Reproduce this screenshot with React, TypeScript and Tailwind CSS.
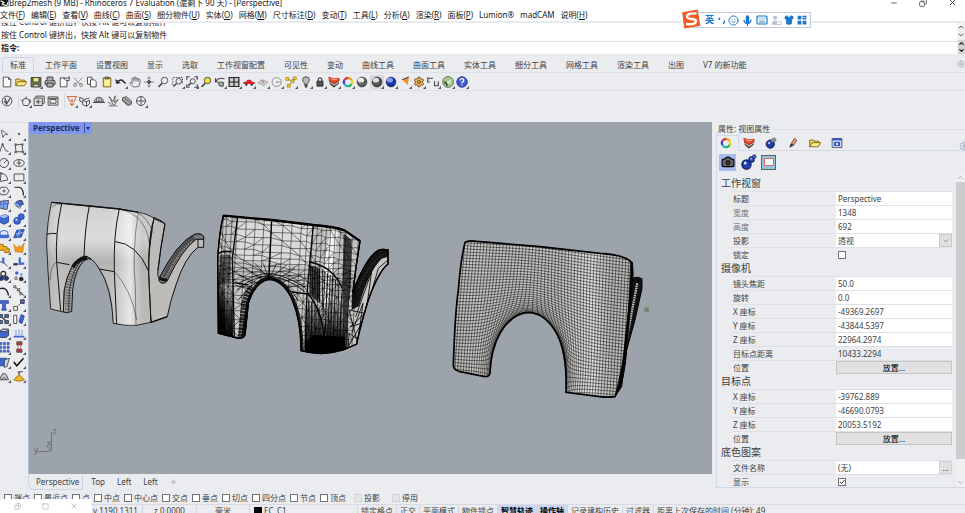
import React from 'react';
import {
  Camera, ChevronDown, ChevronUp, Copy, Hand, Keyboard, Mic, Minus,
  MousePointer2, Printer, Scissors, Settings, Shirt, Smile, Square, X,
} from 'lucide-react';

/* ---------- icons ---------- */

const Svg: React.FC<{ children: React.ReactNode; className?: string }> = ({ children, className = 'size-3' }) => (
  <svg viewBox="0 0 16 16" className={`${className} shrink-0`} fill="none" stroke="#444" strokeWidth="1.2" aria-hidden="true">
    {children}
  </svg>
);

const Sphere = ({ a, b }: { a: string; b: string }) => (
  <Svg>
    <circle cx="8" cy="8" r="6.5" fill={b} stroke="#222" strokeWidth="0.8" />
    <ellipse cx="6.5" cy="5.5" rx="4.3" ry="3.2" fill={a} stroke="none" />
    <path d="M3 10 Q8 13 13 9" stroke={a} strokeWidth="0.8" opacity="0.5" />
  </Svg>
);

const Wheel = () => (
  <Svg>
    <path d="M8 2.5 A5.5 5.5 0 0 1 12.8 5.3" stroke="#f59b1c" strokeWidth="3" />
    <path d="M12.8 5.3 A5.5 5.5 0 0 1 12.8 10.7" stroke="#e8d51c" strokeWidth="3" />
    <path d="M12.8 10.7 A5.5 5.5 0 0 1 8 13.5" stroke="#27b54a" strokeWidth="3" />
    <path d="M8 13.5 A5.5 5.5 0 0 1 3.2 10.7" stroke="#1fb5d8" strokeWidth="3" />
    <path d="M3.2 10.7 A5.5 5.5 0 0 1 3.2 5.3" stroke="#4338d8" strokeWidth="3" />
    <path d="M3.2 5.3 A5.5 5.5 0 0 1 8 2.5" stroke="#e82a4b" strokeWidth="3" />
  </Svg>
);

const Layers = () => (
  <Svg>
    <path d="M2 6 L8 10 L14 6 V10 L8 15 L3 11Z" fill="#5a403c" stroke="#333" strokeWidth="0.8" />
    <path d="M1 1.5 L8 3.5 L15 3 V6 L8 10 L2 7Z" fill="#ef4a26" stroke="#8f2415" strokeWidth="0.7" />
    <path d="M3 8.5 L8 12 L14 8" stroke="#f4f4f4" />
    <path d="M4 3.5 L8 5 L12 4.5" stroke="#ffb199" />
  </Svg>
);

const Folder = () => (
  <Svg>
    <path d="M1 13 V4 H6 L7 5.5 H13 V8" fill="#f6dc62" stroke="#7d6511" />
    <path d="M1 13 L4 7.5 H15.5 L12.5 13Z" fill="#fbe98b" stroke="#7d6511" />
  </Svg>
);

const Lens = ({ fill = 'none' }: { fill?: string }) => (
  <Svg>
    <circle cx="10" cy="6" r="4.3" fill={fill} />
    <path d="M7 9.5 L2 14.5" strokeWidth="2" />
  </Svg>
);

const Blob = () => (
  <Svg className="size-4">
    <circle cx="5.5" cy="10.5" r="4.6" fill="#1f3fb4" stroke="#10205f" />
    <path d="M8 8 L10 6" stroke="#10205f" strokeWidth="2.5" />
    <circle cx="10.5" cy="5.5" r="2.6" fill="#2f55c6" stroke="#10205f" />
    <circle cx="13.3" cy="2.6" r="1.8" fill="#4b72e3" stroke="#10205f" strokeWidth="0.8" />
    <circle cx="4.2" cy="9" r="1.5" fill="#d9e4ff" stroke="none" />
    <circle cx="10" cy="4.8" r="0.8" fill="#d9e4ff" stroke="none" />
  </Svg>
);

const standardTools: { name: string; icon: React.ReactNode; fly?: boolean; on?: boolean }[] = [
  { name: 'New', icon: <Svg><path d="M3 1.5 H10 L13 4.5 V14.5 H3Z" fill="#fff" /><path d="M10 1.5 V4.5 H13" /></Svg> },
  { name: 'Open', icon: <Folder /> },
  { name: 'Save', icon: <Svg><path d="M1.5 2 H14.5 V14.5 H1.5Z" fill="#77783d" stroke="#333" /><path d="M4 2 H12 V8 H4Z" fill="#e8e68c" /><path d="M4.5 11 H11.5 V14.5 H4.5Z" fill="#ddd" /></Svg>, fly: true },
  { name: 'Print', icon: <Printer className="size-3 text-neutral-700" fill="#aaa" /> },
  { name: 'Properties', icon: <Svg><path d="M3 2.5 H9 V5 H12 V14.5 H3Z" fill="#fff" /><path d="M7 3 H12 L15 1 V6 L11 6" fill="#ddd" /></Svg> },
  { name: 'Cut', icon: <Scissors className="size-3 -rotate-90 text-neutral-500" strokeWidth={1.6} /> },
  { name: 'Copy', icon: <Svg><path d="M2 1.5 H8 V11 H2Z" fill="#fff" /><path d="M6 5 H11 L13.5 7.5 V14.5 H6Z" fill="#fff" /></Svg> },
  { name: 'Paste', icon: <Svg><path d="M3 2.5 H13 V14.5 H3Z" fill="#f4df62" stroke="#6b5d14" /><path d="M5.5 1.5 H10.5 V4 H5.5Z" fill="#999" /><path d="M5 5 H12 V13 H5Z" fill="#fbf0a4" stroke="none" /></Svg> },
  { name: 'Undo', icon: <Svg><path d="M2 9 Q7 3 11 7 Q13 9 14 10" stroke="#222" strokeWidth="2" /><path d="M1 5 L2 10 L7 9Z" fill="#222" /></Svg>, fly: true },
  { name: 'Pan', icon: <Hand className="size-3 text-neutral-600" strokeWidth={1.6} /> },
  { name: 'Move view', icon: <Svg><path d="M8 1 V15 M1 8 H15 M6 4 L8 1 L10 4 M6 12 L8 15 L10 12" stroke="#888" /><circle cx="8" cy="8" r="2" fill="#666" /></Svg> },
  { name: 'Zoom', icon: <Lens /> },
  { name: 'Zoom window', icon: <Svg><path d="M1 12 V2 H14 V10" strokeDasharray="2 1.5" /><circle cx="9" cy="7" r="3.7" /><path d="M6 10 L2 14" strokeWidth="2" /></Svg>, fly: true },
  { name: 'Zoom extents', icon: <Svg><path d="M1 5 V1 H5 M11 1 H15 V5 M15 11 V15 H11 M5 15 H1 V11" strokeWidth="1.6" /><circle cx="9" cy="7" r="3.4" /><path d="M6.5 9.5 L3 13" strokeWidth="2" /></Svg>, fly: true },
  { name: 'Zoom selected', icon: <Lens fill="#f3dc3c" /> },
  { name: 'Rotate view', icon: <Svg><path d="M2 3 V8 H7 M2 7 Q7 1 14 4" strokeWidth="1.6" /><path d="M6 10 Q9 6 13 9 L12 14 L7 13Z" fill="#aaa" /></Svg>, fly: true },
  { name: 'Viewports', icon: <Svg><path d="M1.5 2 H14.5 V14 H1.5Z M8 2 V14 M1.5 8 H14.5" stroke="#222" strokeWidth="1.6" fill="#ccc" /></Svg>, fly: true },
  { name: 'Right view', icon: <Svg><path d="M0.5 10.5 V8 L4 7.5 L6 5 H10 L12 7.5 L15.5 8 V10.5Z" fill="#d91e2a" stroke="none" /><path d="M3 11.5 H6 M10 11.5 H13" stroke="#222" strokeWidth="2" /></Svg>, fly: true },
  { name: 'CPlane', icon: <Svg><path d="M1 9 L7 5 L15 8 L9 13Z" fill="#ccc" stroke="#aaa" /><path d="M6 5 L9 9" stroke="#b44" /></Svg>, fly: true },
  { name: 'Circle', icon: <Svg><circle cx="7.5" cy="8" r="6" stroke="#888" /><path d="M7.5 8 H13" stroke="#999" /><circle cx="7.5" cy="8" r="1" fill="#888" stroke="none" /></Svg>, fly: true },
  { name: 'Points', icon: <Svg><path d="M3 4 L10 7 L13 3 M10 7 L5 13" stroke="#b38a16" /><path d="M1 2 H5 V6 H1Z M8 5 H12 V9 H8Z M11 1 H15 V5 H11Z M3 11 H7 V15 H3Z" fill="#f0c81f" stroke="#8c6c0c" strokeWidth="0.7" /></Svg>, fly: true },
  { name: 'Show', icon: <Svg><path d="M6 11 C6 8 3.5 8 3.5 5 A4.5 4 0 0 1 12.5 5 C12.5 8 10 8 10 11Z" fill="#bbb" /><path d="M6 12.5 H10 M6.5 14.5 H9.5" stroke="#222" strokeWidth="1.6" /></Svg>, fly: true },
  { name: 'Lock', icon: <Svg><path d="M5.5 7 V5 A2.5 2.5 0 0 1 10.5 5 V7" strokeWidth="1.6" /><path d="M4 7 H12 V13.5 H4Z" fill="#555" stroke="#222" /></Svg>, fly: true },
  { name: 'Layers', icon: <Layers />, fly: true },
  { name: 'Color', icon: <Wheel />, fly: true },
  { name: 'Shade', icon: <Sphere a="#eee" b="#555" /> },
  { name: 'Shade selected', icon: <Sphere a="#ddd" b="#444" />, fly: true, on: true },
  { name: 'Render', icon: <Sphere a="#7f9bf2" b="#0b2a9b" />, fly: true },
  { name: 'Spotlight', icon: <Svg><path d="M4 5 L13 1 L12 12Z" fill="#f0941f" stroke="none" /><path d="M4 5 L13 1.5" stroke="#555" strokeWidth="1.5" /></Svg>, fly: true },
  { name: 'Options', icon: <Settings className="size-3 text-yellow-900" fill="#dfbd67" strokeWidth={1.8} />, fly: true },
  { name: 'Dimension', icon: <Svg><path d="M1 2 V8 H4 M1 3 H8 M10 7 V13 H15 V7" strokeWidth="1.5" /></Svg>, fly: true },
  { name: 'Grasshopper', icon: <Svg><circle cx="8" cy="8" r="7.2" fill="#a3c78d" stroke="#666" /><path d="M3 12 L8 7 L13 4 L11 10 Z" fill="#d3e9c5" stroke="none" /><path d="M3 8 Q6 9 7 13" stroke="#3c5430" strokeWidth="2.5" /></Svg>, fly: true },
  { name: 'Help', icon: <Svg><circle cx="8" cy="8" r="7" fill="#3c58cf" stroke="#26389b" /><path d="M5.5 6 Q5.5 3.5 8 3.5 Q10.5 3.5 10.5 6 Q10.5 7.2 8 8.5 V10 M8 11.5 V13" stroke="#fff" strokeWidth="1.7" /></Svg>, fly: true },
];

const subTools = [
  { name: 'Analyze', fly: false, icon: <Svg><circle cx="8" cy="8" r="6.5" /><path d="M5 4 L8 11 L13 3 M4 8 L8 13" strokeWidth="1.5" /></Svg> },
  { name: 'Teapot', fly: true, icon: <Svg><path d="M4 6 Q8 3 12 6 Q14 10 11 14 H5 Q2 10 4 6Z M4 9 L1 6 M12 7 Q16 6 13 11 M8 4 V2" /></Svg> },
  { name: 'Windows', fly: false, icon: <Svg><path d="M4 4 V1.5 H15 V11 H13" /><path d="M1.5 4 H12.5 V14 H1.5Z" fill="#ddd" /><path d="M7 5.5 V12 M4 9 H10" /></Svg> },
  { name: 'Frame', fly: false, icon: <Svg><path d="M1.5 2.5 H14.5 V13.5 H1.5Z M4 6 H12 V11 H4Z M1.5 4.5 H14.5" /></Svg> },
  { name: 'Section', fly: true, icon: <Svg><path d="M2 2 H14 L11 8 H5Z M8 5 V14 M5 11 L8 14 L11 11" stroke="#d4733c" strokeWidth="1.4" /></Svg> },
  { name: 'Box', fly: true, icon: <Svg><path d="M1 3 L7 6 L14 4 M5 7 L10 9 V15 L5 13Z M10 9 L14 7 V12 L10 15 M1 3 V8 L5 10" /></Svg> },
  { name: 'Dome', fly: false, icon: <Svg><path d="M2 9 A6 6 0 0 1 14 9Z M0 10 H16 M8 3 V9 M5 4 V9 M11 4 V9" /></Svg> },
  { name: 'Grass', fly: false, icon: <Svg><path d="M8 13 L3 2 L8 9 L11 1 L10 10 L15 6 L10 13Z M1 9 L6 13 M2 14.5 H14" strokeWidth="1" /></Svg> },
  { name: 'Hatch', fly: false, icon: <Svg><path d="M2 4 L7 2 L14 8 V12 L9 14 L2 8Z M4 3 L14 12 M2 6 L11 14" strokeWidth="1" fill="#aaa" /></Svg> },
  { name: 'Target', fly: true, icon: <Svg><circle cx="8" cy="8" r="6" /><path d="M8 2 V14 M2 8 H14" /></Svg> },
];

const B = '#3f66d0';
const sideTools: React.ReactNode[] = [
  <MousePointer2 className="size-[10px] rotate-12 text-neutral-600" strokeWidth={1.8} />,
  <Svg><circle cx="8" cy="8" r="1" fill="#444" /></Svg>,
  <Svg><path d="M2 14 L6 3 L10 11 L14 13" /><circle cx="6" cy="3" r="1" /></Svg>,
  <Svg><path d="M3 4 L12 3 M12 3 L13 13 M3 4 L4 13 H13" /><path d="M2 2 H5 V5 H2Z M11 2 H14 V5 H11Z M2 12 H5 V15 H2Z M12 12 H15 V15 H12Z" fill="#666" stroke="none" /></Svg>,
  <Svg><circle cx="8" cy="8" r="6" /><path d="M8 8 L12 4" /></Svg>,
  <Svg><ellipse cx="8" cy="8" rx="7" ry="4.5" /><path d="M8 3 V11 M5 8 H11" /></Svg>,
  <Svg><path d="M3 14 L4 3 Q12 4 13 12 Z" /><circle cx="4" cy="3" r="1" /></Svg>,
  <Svg><path d="M1.5 4 H14.5 V13 H1.5Z" /></Svg>,
  <Svg><path d="M4 3 H11 L15 8 L11 13 H4 L1 8Z" /><circle cx="8" cy="8" r="1.4" /></Svg>,
  <Svg><path d="M2 3 H8 Q14 4 14 14" stroke="#222" strokeWidth="1.6" /></Svg>,
  <Svg><path d="M3 3 L14 2 L12 14 L2 12Z" fill="#84a3f0" /><path d="M1 7 L15 6 M8 1 L7 14" stroke={B} /></Svg>,
  <Svg><path d="M2 7 Q5 1 12 2 L14 7 Q10 7 9 13Z" fill={B} /><path d="M2 7 Q7 6 9 13" stroke="#fff" /></Svg>,
  <Svg><path d="M2 5 L9 2 L14 4 V12 L8 15 L2 12Z" fill={B} stroke="#28479f" /><path d="M2 5 L8 7 L14 4 L9 2Z" fill="#a8c0f8" stroke="none" /></Svg>,
  <Svg><circle cx="11" cy="5" r="4" fill={B} stroke="#28479f" /><circle cx="5.5" cy="10.5" r="4.5" fill={B} stroke="#28479f" /><circle cx="4.5" cy="9" r="1.5" fill="#c5d5ff" stroke="none" /></Svg>,
  <Svg><path d="M3 5 Q8 1 13 5 V13 H3Z" fill="#dfe8fc" stroke={B} /><path d="M1 13 H15 V9 H1Z" fill={B} stroke="none" /></Svg>,
  <Svg><path d="M5 3 L15 2 L11 12 L1 13Z" fill={B} stroke="#28479f" /><path d="M4 8 L13 6 M9 3 L6 12" stroke="#b9ccfa" /></Svg>,
  <Svg><path d="M2 3 H7 V6 H12 V9 H15 V14 H9 V11 H2Z" fill="#f0af24" stroke="#94620a" /></Svg>,
  <Svg><path d="M1 3 L6 8 L8 4 L9 8 L15 1 L13 14 L3 13Z" fill="#f39a1f" stroke="#b1620c" strokeWidth="0.6" /></Svg>,
  <Svg><path d="M1 8 H7 L13 14" /><path d="M7 2 V10" stroke={B} strokeWidth="3" /></Svg>,
  <Svg><path d="M1 12 H6 V10 H1Z" fill="#333" /><path d="M9 2 V12 M9 10 H15" stroke={B} strokeWidth="3" /></Svg>,
  <Svg><circle cx="7" cy="5" r="3.2" fill="#fff" stroke="#222" strokeWidth="1.6" /><circle cx="4.5" cy="11" r="3" fill="#22358a" /><circle cx="11" cy="11" r="3" fill="#22358a" /></Svg>,
  <Svg><circle cx="5" cy="4" r="2.3" fill={B} stroke="none" /><circle cx="11" cy="6" r="2" fill="#8aa4ea" stroke="none" /><circle cx="4" cy="11" r="1.8" fill="#fff" /><circle cx="11" cy="12" r="2.6" fill="#223" /></Svg>,
  <Svg><path d="M2 5 Q12 2 14 14" stroke="#222" strokeWidth="1.8" /></Svg>,
  <Svg><path d="M2 2 L7 6 L10 11 L15 14 M5 8 L9 4" /><path d="M1 1 H4 V4 H1Z M6 5 H9 V8 H6Z M9 10 H12 V13 H9Z" fill="#aaa" strokeWidth="0.8" /></Svg>,
  <Svg><path d="M2 2 H14 V6 H11 V5 H10 V13 H11 V15 H5 V13 H6 V5 H5 V6 H2Z" fill={B} stroke="#1d3478" strokeWidth="0.7" /></Svg>,
  <Svg><path d="M4 12 L12 4" strokeDasharray="2 1" /><path d="M1 10 H6 V15 H1Z" fill="#fff" /><path d="M10 1 H15 V6 H10Z" fill={B} /></Svg>,
  <Svg><path d="M1 2 H6 V6 H1Z M9 2 H14 V6 H9Z M1 10 H6 V14 H1Z M9 10 H14 V14 H9Z" fill={B} /><path d="M6 6 L10 10" strokeWidth="2" /></Svg>,
  <Svg><path d="M1 3 H5 V14 H1Z" fill="#fff" /><path d="M8 12 L11 2 L15 4 L12 14Z" fill={B} stroke="#28479f" /></Svg>,
  <Svg><path d="M2 6 L6 3 H14 V11 L11 14 H2Z" fill={B} /><path d="M2 6 L6 3 H14 L11 6Z" fill="#bccffc" /></Svg>,
  <Svg><path d="M1 12 H15 M4 4 V11 M8 3 V11 M12 4 V11" stroke="#8aa4ea" strokeWidth="1.5" /><path d="M1 13 H15" stroke={B} strokeWidth="2" /></Svg>,
  <Svg><path d="M1 2 H5 V5 H1Z M7 2 H10 V5 H7Z M12 2 H15 V5 H12Z M1 7 H5 V10 H1Z M7 7 H10 V10 H7Z M12 7 H15 V10 H12Z M1 12 H5 V15 H1Z M7 12 H10 V15 H7Z M12 12 H15 V15 H12Z" fill={B} stroke="#28407f" strokeWidth="0.6" /></Svg>,
  <Svg><path d="M5 1 H12 V5 L10 6 V10 L12 11 V15 H5 V11 L7 10 V6 L5 5Z" fill="#b03a3c" stroke="#555" /><path d="M7 6 H10 V10 H7Z" fill="#fff" stroke="none" /></Svg>,
  <Svg><path d="M3 3 H11 L9 13 H1Z" fill={B} stroke="#28479f" /><path d="M9 5 L15 3 L12 14 L8 15Z" fill="#c9d7fb" /></Svg>,
  <Svg><path d="M1 8 L5 13 L14 3" stroke="#111" strokeWidth="2" /></Svg>,
  <Svg><path d="M2 13 L6 5 Q10 3 12 8 L14 13Z" fill="#ccc" /><path d="M5 13 Q7 8 11 12" /></Svg>,
  <Svg><path d="M1 13 L8 6 L15 13 L8 15Z" fill="#f1b42b" stroke="#9a6b0b" /><path d="M9 6 L7 3 L13 2" strokeWidth="1.6" /></Svg>,
];

// corner mark on buttons that open a flyout
const Fly = () => (
  <svg viewBox="0 0 4 4" className="absolute right-0 bottom-0 size-[3px]" aria-hidden="true">
    <path d="M4 0 V4 H0Z" fill="#555" />
  </svg>
);

/* ---------- viewport geometry ---------- */

type Pt = [number, number];
const poly = (pts: Pt[]) => 'M' + pts.map(([x, y]) => `${x.toFixed(1)},${y.toFixed(1)}`).join('L');

// quad mesh: a regular grid pushed away from the arch opening
const quadMesh = () => {
  const warp = (x: number, y: number): Pt => {
    const cx = 265, cy = 430, rx = 112, ry = 178;
    const dx = (x - cx) / rx, dy = (y - cy) / ry;
    const r = Math.hypot(dx, dy) || 0.001;
    const k = Math.cbrt(r * r * r + 1) / r;
    return [cx + dx * k * rx, cy + dy * k * ry];
  };
  const out: string[] = [];
  for (let c = 20; c < 600; c += 9.6) {
    const pts: Pt[] = [];
    for (let y = 0; y <= 520; y += 10) pts.push(warp(c - (y - 40) * 0.06, y));
    out.push(poly(pts));
  }
  for (let r = -20; r < 540; r += 9.4) {
    const pts: Pt[] = [];
    for (let x = 20; x <= 600; x += 10) pts.push(warp(x, r + x * 0.1));
    out.push(poly(pts));
  }
  return out.join('');
};

// triangle mesh: uneven rows and columns, some cells split by a diagonal
const triMesh = () => {
  const cols = [46, 56, 66, 82, 98, 125, 152, 178, 200, 235, 262, 290, 308, 325, 338, 352, 365, 378, 392, 408, 424, 444, 462];
  const rows = [34, 42, 56, 76, 98, 118, 138, 154, 168, 182, 194, 204, 216, 232, 250, 275, 300, 325, 350, 375, 400, 430];
  const at = (c: number, r: number): Pt => [
    cols[c] - (rows[r] - 40) * 0.06,
    rows[r] + (cols[c] - 50) * 0.1 + ((c * 7 + r * 5) % 4) * 2,
  ];
  const out: string[] = [];
  cols.forEach((_, c) => out.push(poly(rows.map((__, r) => at(c, r)))));
  rows.forEach((_, r) => out.push(poly(cols.map((__, c) => at(c, r)))));
  for (let c = 0; c < cols.length - 1; c++)
    for (let r = 0; r < rows.length - 1; r++)
      if ((c * 3 + r * 2) % 5 < 2 || r > 9)
        out.push((c + r) % 2 ? poly([at(c, r), at(c + 1, r + 1)]) : poly([at(c + 1, r), at(c, r + 1)]));
  return out.join('');
};

const QUADS = quadMesh();
const TRIS = triMesh();

const FRONT1 = 'M35,37L148,48L238,57L295,67Q330,74 342,86Q325,150 326,250L333,397L288,406Q250,407 220,400Q215,290 178,237Q155,198 132,200Q88,215 73,300L70,366L32,357L24,240L20,160Q22,90 35,37Z';
const BODY2 = 'M55,47L200,60L325,75Q390,80 420,92L465,123L452,210L444,275Q485,170 520,151Q532,146 549,150V192Q520,215 490,300Q470,365 462,400L455,432L415,450Q350,470 288,452Q288,360 262,300Q235,240 192,238Q150,245 130,310L120,405Q115,416 100,415L40,400L38,180Q42,100 55,47Z';
const BODY3 = 'M75,37Q85,30 110,34L300,50L480,70Q560,75 577,100Q574,180 562,280L552,380L540,460L525,500Q500,503 480,500L378,487Q382,370 350,310Q315,248 265,247Q215,250 180,310Q152,360 150,430Q148,440 135,440L60,425Q40,420 40,405Q45,250 55,180Q62,90 75,37Z';

const Scene = () => (
  <svg viewBox="29 122 683 351" preserveAspectRatio="xMinYMin meet" className="block h-full w-full" role="img" aria-label="Perspective">
    <defs>
      <linearGradient id="clay" x1="0" y1="0" x2="0" y2="1">
        <stop offset="0" stopColor="#cfcfcf" />
        <stop offset="0.3" stopColor="#dcdcdc" />
        <stop offset="0.48" stopColor="#b4b4b2" />
        <stop offset="0.6" stopColor="#bcbbb9" />
        <stop offset="1" stopColor="#c4c3c0" />
      </linearGradient>
      <linearGradient id="sheen" x1="0" y1="0" x2="1" y2="0">
        <stop offset="0" stopColor="#999" stopOpacity="0.35" />
        <stop offset="0.2" stopColor="#fff" stopOpacity="0" />
        <stop offset="0.6" stopColor="#fff" stopOpacity="0" />
        <stop offset="0.78" stopColor="#fff" stopOpacity="0.6" />
        <stop offset="0.9" stopColor="#aaa" stopOpacity="0.3" />
      </linearGradient>
      <linearGradient id="fade" x1="0" y1="0" x2="0" y2="1">
        <stop offset="0" stopColor="#000" stopOpacity="0" />
        <stop offset="0.6" stopColor="#000" stopOpacity="0.75" />
        <stop offset="1" stopColor="#000" />
      </linearGradient>
      <clipPath id="clipTri"><path d={BODY2} /></clipPath>
      <clipPath id="clipQuad"><path d={BODY3} /></clipPath>
    </defs>

    {/* brep */}
    <g transform="translate(40 190) scale(0.3333)" fill="none" stroke="#111" strokeWidth="3">
      <path d="M340,85L375,101Q362,170 354,240Q352,262 358,264Q412,158 462,134Q484,127 491,140V172H474Q435,200 408,285Q390,335 382,380L333,397L320,250Z" fill="#bdbcb9" />
      <path d="M358,264Q412,158 462,134Q484,127 491,140V148L468,148Q425,180 384,268Q376,284 362,278Q354,274 358,264Z" fill="#777" />
      <path d="M374,262Q412,178 462,142" stroke="#1a1a1a" strokeWidth="15" strokeDasharray="5 2" opacity="0.6" />
      <path d="M378,262Q416,182 456,155" stroke="#bbb" strokeWidth="3" strokeDasharray="6 3" />
      <path d="M358,262Q364,270 382,270" strokeWidth="9" />
      <path d="M474,148V172" />
      <path d={FRONT1} fill="url(#clay)" />
      <path d={FRONT1} fill="url(#sheen)" stroke="none" />
      <path d="M132,198Q88,215 73,300L70,366Q82,371 95,364L98,300Q105,235 135,210Q148,203 152,208Q145,198 132,198Z" fill="#aaa" />
      <path d="M128,206Q96,232 86,300L83,364" strokeDasharray="4 4" strokeWidth="18" stroke="#222" opacity="0.5" />
      <path d="M86,364L88,300Q98,235 128,208" strokeWidth="2" />
      <path d="M98,232Q110,208 142,203" strokeWidth="11" />
      <path d="M65,42Q45,130 50,217L62,362M148,48Q135,110 132,200M238,57Q220,130 223,245L230,402M342,86Q325,130 326,250L333,397M20,133Q35,128 50,131M226,155Q290,160 326,243M50,217L88,224M178,237L223,245M340,82Q360,88 375,101Q362,170 354,240" />
      <path d="M295,67Q276,180 286,290L288,406M238,57Q318,75 328,160M290,66Q325,85 340,130M223,245Q275,300 290,390M30,270Q33,222 50,217M38,50Q50,38 65,42" strokeWidth="1.6" stroke="#333" />
      <path d="M333,397L382,380M35,37L148,48L238,57L295,67" strokeWidth="4" />
    </g>

    {/* triangulated mesh */}
    <g transform="translate(205 200) scale(0.3333)" fill="none" stroke="#000" strokeWidth="2">
      <path d={BODY2} fill="#c6c6c4" strokeWidth="4" />
      <g clipPath="url(#clipTri)">
        <path d="M95,60L330,75L310,200L95,180Z" fill="#e2e2e2" stroke="none" opacity="0.7" />
        <path d="M378,80L400,84L372,290L345,360L350,240Z" fill="#fff" stroke="none" opacity="0.8" />
        <path d={TRIS} strokeWidth="1.8" opacity="0.8" />
        <path d="M100,250Q150,222 192,220Q240,225 300,262M95,270Q145,228 192,228Q245,232 300,275M100,300Q150,236 192,232Q235,236 280,300" strokeWidth="2.5" />
        <path d="M192,238L150,190M192,238L175,190M192,238L215,190M192,238L245,195M160,250L100,225M175,242L120,205M225,250L290,225M210,242L270,205M240,265L300,250M145,270L90,255" />
        <path d="M112,420L128,310Q150,238 192,234Q237,238 266,300Q290,360 292,460" strokeWidth="9" opacity="0.85" />
        <path d="M108,420L120,310Q128,275 142,262" strokeWidth="22" strokeDasharray="8 2" opacity="0.75" />
        <path d="M46,165H76V250H42Z" fill="#000" opacity="0.55" />
        <path d="M37,180H60V420H36Z" fill="url(#fade)" stroke="none" />
        <path d="M38,250L84,240V412L38,402Z" fill="url(#fade)" stroke="none" />
        <path d="M315,195L345,205V310L318,290Z" fill="#000" stroke="none" opacity="0.6" />
        <path d="M298,320L412,300L422,452L300,464Z" fill="url(#fade)" stroke="none" />
        <path d="M316,200V290M322,200V290M330,203V296M337,205V300M344,208V305M352,210V330M360,215L354,350M368,220L360,400M376,225L368,410M384,230L376,420M392,240L384,420M402,250L396,420M410,280L404,420M312,300V400M320,305V400M330,312V400M342,325V400" strokeWidth="2.6" />
        <path d="M350,225V340M372,290L352,400" stroke="#ddd" strokeDasharray="3 5" strokeWidth="2" />
        <path d="M300,465V428L325,405L420,410V460Z" fill="#000" stroke="none" />
        <path d="M416,100L412,260L416,450H428L430,330L438,250L440,120Z" fill="#000" opacity="0.7" stroke="none" />
        <path d="M98,50L82,175L85,290L88,412M200,60L192,235M325,75L314,190L306,280L300,455M40,160Q55,150 80,155M314,186Q385,200 412,265M306,280Q350,320 358,420M85,248L130,255M255,275L306,282" strokeWidth="4" />
        <path d="M441,275Q485,170 520,149L549,148V170L530,176Q490,215 462,318L440,330Z" fill="#000" stroke="none" opacity="0.9" />
        <path d="M462,262Q490,195 532,162" stroke="#aaa" strokeDasharray="2 6" />
        <path d="M452,350L500,215L484,330L520,205L549,180M440,400L474,310L458,430L432,330L480,340L436,380L470,370L430,440L432,400L462,420" strokeWidth="2.5" />
      </g>
      <path d="M55,47L200,60L325,75Q390,80 420,92L465,123" strokeWidth="7" />
      <path d={BODY2} strokeWidth="4" />
    </g>

    {/* quad mesh */}
    <g transform="translate(440 230) scale(0.3333)" fill="none" stroke="#000">
      <path d="M577,145Q590,138 606,146V176L585,270L560,360L545,470L525,500L545,340Z" fill="#111" strokeWidth="3" />
      <path d="M592,160Q578,230 560,330" stroke="#bbb" strokeWidth="7" strokeDasharray="5 2" />
      <path d="M577,96L580,130L566,300L560,360Q556,450 525,500Z" fill="#080808" strokeWidth="2" />
      <path d={BODY3} fill="#c6c6c4" />
      <path d={BODY3} fill="url(#sheen)" stroke="none" opacity="0.9" />
      <g clipPath="url(#clipQuad)">
        <path d={QUADS} strokeWidth="1.7" opacity="0.85" />
        <path d="M577,90L568,280L552,400L530,500" strokeWidth="12" opacity="0.8" />
      </g>
      <path d={BODY3} strokeWidth="5" />
    </g>

    {/* world axes */}
    <path d="M51.5,432V451M51,451L37,452M51,451L47,446" stroke="#6d7278" fill="none" />
    <g fill="#666b70" fontSize="8">
      <text x="53" y="434">z</text>
      <text x="34" y="453">y</text>
      <text x="47" y="446">x</text>
    </g>
    <rect x="644" y="307" width="5" height="5" fill="#808a86" />
    <rect x="645" y="308" width="2" height="2" fill="#4f9a5a" />
    <rect x="647" y="309" width="1" height="2" fill="#b05a5a" />
  </svg>
);

/* ---------- data ---------- */

const menus = [
  ['文件', 'F'], ['编辑', 'E'], ['查看', 'V'], ['曲线', 'C'], ['曲面', 'S'], ['细分物件', 'U'], ['实体', 'O'], ['网格', 'M'],
  ['尺寸标注', 'D'], ['变动', 'T'], ['工具', 'L'], ['分析', 'A'], ['渲染', 'R'], ['面板', 'P'], ['Lumion®', ''], ['madCAM', ''], ['说明', 'H'],
];

const toolTabs = ['标准', '工作平面', '设置视图', '显示', '选取', '工作视窗配置', '可见性', '变动', '曲线工具', '曲面工具', '实体工具', '细分工具', '网格工具', '渲染工具', '出图', 'V7 的新功能'];

const osnaps = ['端点', '最近点', '点', '中点', '中心点', '交点', '垂点', '切点', '四分点', '节点', '顶点'];

type Row = { label: string; value?: string; kind?: 'select' | 'check' | 'static' | 'button' | 'file'; muted?: boolean; on?: boolean };

const sections: { title: string; rows: Row[] }[] = [
  {
    title: '工作视窗',
    rows: [
      { label: '标题', value: 'Perspective' },
      { label: '宽度', value: '1348', muted: true },
      { label: '高度', value: '692', muted: true },
      { label: '投影', value: '透视', kind: 'select' },
      { label: '锁定', kind: 'check' },
    ],
  },
  {
    title: '摄像机',
    rows: [
      { label: '镜头焦距', value: '50.0' },
      { label: '旋转', value: '0.0' },
      { label: 'X 座标', value: '-49369.2697' },
      { label: 'Y 座标', value: '-43844.5397' },
      { label: 'Z 座标', value: '22964.2974' },
      { label: '目标点距离', value: '10433.2294', kind: 'static' },
      { label: '位置', value: '放置...', kind: 'button' },
    ],
  },
  {
    title: '目标点',
    rows: [
      { label: 'X 座标', value: '-39762.889' },
      { label: 'Y 座标', value: '-46690.0793' },
      { label: 'Z 座标', value: '20053.5192' },
      { label: '位置', value: '放置...', kind: 'button' },
    ],
  },
  {
    title: '底色图案',
    rows: [
      { label: '文件名称', value: '(无)', kind: 'file' },
      { label: '显示', kind: 'check', on: true },
    ],
  },
];

/* ---------- parts ---------- */

const CheckBox = ({ id, on, disabled }: { id: string; on?: boolean; disabled?: boolean }) => (
  <span className="relative flex size-2 shrink-0">
    <input
      id={id}
      type="checkbox"
      defaultChecked={on}
      disabled={disabled}
      className="peer size-2 appearance-none border border-neutral-500 bg-white disabled:border-neutral-300 disabled:bg-neutral-200"
    />
    <svg viewBox="0 0 8 8" className="pointer-events-none absolute inset-0 hidden size-2 peer-checked:block" fill="none" stroke="#333">
      <path d="M2 4 L3.5 5.5 L6.5 2" />
    </svg>
  </span>
);

const Field = ({ row, id }: { row: Row; id: string }) => {
  const input = <input id={id} defaultValue={row.value} className="h-[13px] min-w-0 flex-1 bg-white px-[2px]" />;
  switch (row.kind) {
    case 'check':
      return <span className="flex flex-1 items-center pl-[2px]"><CheckBox id={id} on={row.on} /></span>;
    case 'static':
      return <output id={id} className="flex-1 px-[2px]">{row.value}</output>;
    case 'button':
      return <button id={id} type="button" className="h-[13px] flex-1 border border-[#c4c4c6] bg-[#e1e1e1] text-center leading-[11px] text-black">{row.value}</button>;
    case 'file':
      return <>{input}<button type="button" aria-label="浏览" className="h-[13px] w-[13px] border border-[#d2d2d4] bg-[#e1e1e1] leading-[8px]">...</button></>;
    case 'select':
      return (
        <span className="relative flex flex-1">
          <select id={id} className="h-[13px] flex-1 appearance-none bg-white px-[2px]"><option>{row.value}</option></select>
          <span className="pointer-events-none absolute top-0 right-0 flex size-[13px] items-center justify-center border border-[#c9c9cb] bg-[#e1e1e1]">
            <ChevronDown className="size-2 text-neutral-500" />
          </span>
        </span>
      );
    default:
      return input;
  }
};

const panelTabs: [string, React.ReactNode][] = [
  ['属性', <Wheel />],
  ['图层', <Layers />],
  ['渲染', <Svg><circle cx="7" cy="9.5" r="5.5" fill="#1d3fa8" stroke="#0e1f58" /><path d="M7 4 L13 1 L15 5 L10 7Z" fill="#8a8f99" stroke="#555" strokeWidth="0.8" /><circle cx="5.5" cy="8" r="1.5" fill="#c5d3ff" stroke="none" /></Svg>],
  ['材质', <Svg><path d="M3 14 L5 9 L8 12Z" fill="#334" stroke="none" /><path d="M6 8 L10 2 L13 4 L9 11Z" fill="#ee9a7a" stroke="#7c4b38" /><path d="M5 9 L8 11.5" stroke="#334" strokeWidth="2" /></Svg>],
  ['图库', <Folder />],
  ['显示', <Svg><path d="M1.5 2 H14.5 V14 H1.5Z" fill="#c9d6f7" stroke="#555" /><path d="M1.5 2 H14.5 V4.5 H1.5Z" fill="#2f55c6" stroke="none" /><path d="M4 6.5 H12 V12 H4Z" fill="#2f55c6" stroke="none" /><circle cx="8" cy="9.3" r="1.6" fill="#dfe7fb" stroke="none" /></Svg>],
];

const PropertiesPanel = () => (
  <aside className="flex w-[249px] shrink-0 flex-col overflow-hidden pt-[3px] pb-[2px]">
    <div className="flex h-2 items-center gap-1 whitespace-nowrap pl-[2px]">
      <h2>属性: 视图属性</h2>
      <span className="h-px flex-1 bg-[#dcdee6]" />
    </div>
    <div className="flex min-h-0 flex-1 flex-col border-b border-l border-[#d3d8e6]">
      <div className="relative flex h-[18px] shrink-0 items-end">
        {panelTabs.map(([name, icon], i) => (
          <button
            key={name}
            aria-label={name}
            className={`flex h-4 w-[22px] items-center justify-center border-b pr-[3px] ${i === 0 ? 'border-t border-r border-t-[#d3d8e6] border-r-[#d3d8e6] border-b-transparent' : 'border-[#d3d8e6]'}`}
          >
            {icon}
          </button>
        ))}
        <span className="h-px flex-1 bg-[#d3d8e6]" />
        <Settings className="absolute -right-1 bottom-0 size-[10px] text-slate-400" />
      </div>
      <div className="flex h-[22px] shrink-0 items-center gap-1 pl-[2px]">
        <button aria-label="相机" className="flex size-[17px] items-center justify-center bg-[#aab8ec]"><Camera className="size-[14px] text-black" fill="#666" /></button>
        <button aria-label="材质球" className="flex size-[17px] items-center justify-center"><Blob /></button>
        <button aria-label="边框" className="flex size-[15px] items-center justify-center border border-[#5f6265] bg-[#8fc7de]"><span className="block h-2 w-[10px] border border-[#e26a63] bg-white" /></button>
      </div>
      <div className="flex min-h-0 flex-1">
        <form className="min-w-0 flex-1 overflow-hidden pt-[3px] pr-1 pl-1">
          {sections.map((s, si) => (
            <section key={s.title}>
              <h3 className="h-[15px] text-[10px] leading-[15px]">{s.title}</h3>
              {s.rows.map((r, i) => {
                const id = `f-${si}-${i}`;
                return (
                  <div key={id} className="ml-[10px] flex h-[14px] items-center border-t border-[#dfe1e8]">
                    <label htmlFor={id} className={`w-[105px] shrink-0 pl-[2px] ${r.muted ? 'text-neutral-500' : ''}`}>{r.label}</label>
                    <Field row={r} id={id} />
                  </div>
                );
              })}
            </section>
          ))}
        </form>
        <div className="flex w-[9px] shrink-0 flex-col items-center bg-[#f0f0f2] text-neutral-400">
          <ChevronUp className="size-[9px]" />
          <span className="w-full flex-1 bg-[#cdcdcd]" />
          <span className="flex h-7 items-end"><ChevronDown className="size-[9px]" /></span>
        </div>
      </div>
    </div>
  </aside>
);

const ImeBar = () => (
  <div className="absolute top-3 left-[684px] flex h-4 w-[127px] items-center justify-between border border-[#c5cbd6] bg-white pr-[3px] pl-5 text-[#1977cc]">
    <svg viewBox="0 0 18 18" className="absolute -top-1 -left-1 size-5" aria-hidden="true">
      <path d="M1 3 L15 0.5 L17.5 15 L3 17.5Z" fill="#f25a20" />
      <path d="M14 4 Q5 3.5 5.5 7 Q6 9 10 9 Q14 9.5 13.5 11.5 Q12 14.5 4.5 13.5" fill="none" stroke="#fff" strokeWidth="2.2" />
    </svg>
    <b className="text-[9px]">英</b>
    <Svg className="size-[9px]"><circle cx="4" cy="5" r="2" fill="#1977cc" stroke="none" /><path d="M12 8 Q15 10 11 14" stroke="#1977cc" strokeWidth="2.5" /></Svg>
    <Smile className="size-[11px]" />
    <Svg className="size-[11px]"><path d="M8 1 V8" stroke="#1977cc" strokeWidth="5" strokeLinecap="round" transform="translate(0 2)" /><path d="M3 7 Q3 12.5 8 12.5 Q13 12.5 13 7 M8 12 V16" stroke="#1977cc" strokeWidth="1.8" /></Svg>
    <Keyboard className="size-3" strokeWidth={2.4} />
    <Svg className="size-[11px]"><circle cx="6" cy="4" r="3" fill="#b9c2d0" stroke="none" /><path d="M1 14 Q1 8 6 8 Q10 8 10 14Z" fill="#b9c2d0" stroke="none" /><path d="M8 10 H15 V14 H8Z" stroke="#b9c2d0" fill="#fff" /></Svg>
    <Shirt className="size-[10px]" fill="currentColor" />
    <Svg className="size-[10px]"><path d="M1 1 H7 V7 H1Z M1 9 H7 V15 H1Z M9 9 H15 V15 H9Z" fill="#1977cc" stroke="none" /><path d="M10 2 H14 V6 H10Z" stroke="#1977cc" strokeWidth="2" /></Svg>
  </div>
);

const App: React.FC = () => {
  return (
    <div className="relative flex h-screen flex-col overflow-hidden bg-[#ebecf0] font-['Noto_Sans','Noto_Sans_CJK_SC',sans-serif] text-[8px] leading-[12px] text-neutral-700">
      {/* Title bar */}
      <header className="-mt-1 flex h-[13px] shrink-0 items-center bg-white text-neutral-900">
        <Svg className="size-[9px]"><path d="M0 2 H15 V15 H0Z" fill="#111" stroke="none" /><path d="M1 5 L7 8 L4 11 L12 14 L14 8" stroke="#fff" strokeWidth="2" /></Svg>
        <h1 className="flex-1 whitespace-nowrap">Brep2mesh (9 MB) - Rhinoceros 7 Evaluation (還剩下 90 天) - [Perspective]</h1>
        <div className="flex gap-[21px] pr-2">
          <button aria-label="最小化"><Minus className="size-2" /></button>
          <button aria-label="还原"><Copy className="size-2 -scale-x-100" /></button>
          <button aria-label="关闭"><X className="size-[9px]" /></button>
        </div>
      </header>

      {/* Menu */}
      <nav className="flex h-3 shrink-0 items-center gap-[6px] bg-white whitespace-nowrap text-neutral-900">
        {menus.map(([label, key]) => (
          <a key={label} href="#">{label}{key && <>(<u>{key}</u>)</>}</a>
        ))}
      </nav>

      {/* Command area */}
      <div className="flex h-[34px] shrink-0 border-t-2 border-b border-[#e9eaee] bg-white text-neutral-900">
        <div className="flex min-w-0 flex-1 flex-col">
          <div className="flex h-5 flex-col justify-end overflow-hidden border-b border-[#dfe1e8] pl-px">
            <p className="h-[13px] shrink-0 leading-[13px]">按住 Control 键挤出，快按 Alt 键可以复制物件</p>
            <p className="h-[13px] shrink-0 leading-[13px]">按住 Control 键挤出，快按 Alt 键可以复制物件</p>
          </div>
          <div className="flex flex-1 items-center pl-px">
            <label htmlFor="command" className="font-bold">指令:</label>
            <input id="command" className="h-[10px] flex-1 pl-1 outline-none" />
          </div>
        </div>
        <div className="flex w-2 flex-col items-center justify-between bg-[#f0f0f2]">
          <ChevronUp className="size-2" />
          <ChevronDown className="size-2" />
          <ChevronUp className="size-[7px] bg-neutral-300" strokeWidth={4} />
          <ChevronDown className="size-[7px] bg-neutral-300" strokeWidth={4} />
        </div>
      </div>

      {/* Toolbar tabs */}
      <div className="flex h-[18px] shrink-0 items-end gap-[19px] border-b border-[#dcdfe8] pl-[10px] whitespace-nowrap">
        {toolTabs.map((t, i) => (
          <button key={t} className={`h-[15px] ${i === 0 ? '-mx-2 rounded-t-sm border-x border-t border-[#cdd4e6] px-[7px]' : ''}`}>{t}</button>
        ))}
        <Settings className="ml-auto size-2 self-center text-slate-400" />
      </div>

      <div className="flex h-[18px] shrink-0 items-center border-b border-[#dfe1e8]">
        <div className="grid w-[469px] grid-cols-33">
          {standardTools.map((t) => (
            <button key={t.name} aria-label={t.name} className={`relative flex h-[14px] items-center justify-center ${t.on ? 'bg-[#d8d9dc]' : ''}`}>
              {t.icon}
              {t.fly && <Fly />}
            </button>
          ))}
        </div>
      </div>

      <div className="flex h-5 shrink-0 items-center">
        {subTools.map((t, i) => (
          <button
            key={t.name}
            aria-label={t.name}
            className={`relative flex h-[14px] w-[14px] items-center justify-center ${i === 1 || i === 4 ? 'ml-1 border-l border-[#d3d6de]' : ''}`}
          >
            {t.icon}
            {t.fly && <Fly />}
          </button>
        ))}
      </div>

      {/* Work area */}
      <main className="flex min-h-0 flex-1 pt-[11px]">
        <div className="w-7 shrink-0 overflow-hidden border-t border-[#dcdfe8] pt-1">
          <div className="-ml-1 grid h-64 w-[30px] grid-cols-2 grid-rows-18">
            {sideTools.map((icon, i) => (
              <button key={i} aria-label={`Tool ${i + 1}`} className="relative flex items-center justify-center">
                {icon}
                <Fly />
              </button>
            ))}
          </div>
        </div>

        <div className="flex min-w-0 flex-1 flex-col">
          <div className="relative min-h-0 flex-1 overflow-hidden border-l border-[#b5c0d6] bg-[#9ca3ab]">
            <Scene />
            <button className="absolute top-0 left-0 flex h-3 items-center gap-1 bg-[#7f96ee] pr-px pl-1 font-bold text-[#1d2b5c]">
              Perspective
              <span className="flex h-[10px] items-center border-l border-[#40529c]">
                <svg viewBox="0 0 6 6" className="size-[6px]"><path d="M1 2 H5 L3 5Z" fill="#1d2b5c" /></svg>
              </span>
            </button>
          </div>
          <div className="flex h-4 shrink-0 items-center gap-3 whitespace-nowrap">
            <button className="h-[15px] rounded-bl-md border-r border-b border-l border-[#cdd4e6] pr-[3px] pl-[7px]">Perspective</button>
            <button className="-ml-1">Top</button>
            <button>Left</button>
            <button>Left</button>
            <button aria-label="新增" className="text-neutral-500">✧</button>
          </div>
        </div>

        <div className="w-1 shrink-0" />
        <PropertiesPanel />
      </main>

      {/* Object snaps */}
      <div className="flex h-[15px] shrink-0 items-center gap-1 border-b border-[#d8dbe4] pt-[2px] pl-1 whitespace-nowrap">
        {osnaps.map((o) => (
          <label key={o} className="flex items-center gap-[2px]" htmlFor={`os-${o}`}>
            <CheckBox id={`os-${o}`} />
            {o}
          </label>
        ))}
        <label className="ml-1 flex items-center gap-[2px]" htmlFor="os-project"><CheckBox id="os-project" disabled />投影</label>
        <label className="ml-2 flex items-center gap-[2px]" htmlFor="os-off"><CheckBox id="os-off" disabled />停用</label>
      </div>

      {/* Status bar */}
      <footer className="-mb-1 flex h-3 shrink-0 items-center whitespace-nowrap">
        <span className="w-[143px] shrink-0 border-r border-[#d3d6e0] pl-[93px]">y 1190.1311</span>
        <span className="w-[54px] shrink-0 border-r border-[#d3d6e0] text-center">z 0.0000</span>
        <span className="w-[53px] shrink-0 border-r border-[#d3d6e0] text-center">毫米</span>
        <span className="flex w-[108px] shrink-0 items-center gap-[2px] border-r border-[#d3d6e0] pl-1"><i className="size-2 bg-black" />EC_C1</span>
        {['锁定格点', '正交', '平面模式', '物件锁点', '智慧轨迹', '操作轴', '记录建构历史', '过滤器'].map((s) => (
          <button key={s} className={`border-r border-[#d3d6e0] px-[3px] ${s === '智慧轨迹' || s === '操作轴' ? 'bg-[#ccd5f1] font-bold text-black' : ''}`}>{s}</button>
        ))}
        <span className="pl-[3px]">距离上次保存的时间 (分钟): 49</span>
      </footer>

      {/* Floating pieces */}
      <ImeBar />
      <div className="absolute bottom-0 left-0 flex h-[14px] w-[92px] items-center justify-around bg-white px-1 text-neutral-400 shadow">
        <button aria-label="还原窗口"><Copy className="size-[7px] -scale-x-100" /></button>
        <button aria-label="最大化窗口"><Square className="size-[7px]" /></button>
        <button aria-label="关闭窗口"><X className="size-2" /></button>
      </div>
    </div>
  );
};

export default App;
